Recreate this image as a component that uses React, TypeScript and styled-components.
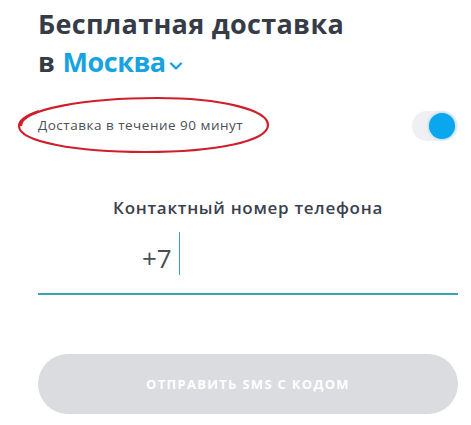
import React from "react";
import styled, { createGlobalStyle } from "styled-components";

const GlobalStyle = createGlobalStyle`
  html, body {
    margin: 0;
    padding: 0;
    background: #ffffff;
  }
  body {
    font-family: "Open Sans", "Noto Sans", sans-serif;
  }
`;

function App() {
  return (
    <StyledPage>
      <GlobalStyle />
      <Title>
        Бесплатная доставка
        <br />в <City>Москва</City>
        <Chevron viewBox="0 0 14 10" aria-hidden="true">
          <path d="M2 2.5 L7 7.5 L12 2.5" />
        </Chevron>
      </Title>

      <OptionRow>
        <OptionText>Доставка в течение 90 минут</OptionText>
        <Mark viewBox="0 0 254 60" aria-hidden="true">
          <path d="M4 31 C 4 14, 70 3, 140 3 C 205 3, 251 15, 251 30 C 251 46, 200 57, 128 57 C 60 57, 2 47, 2 31 C 2 25, 10 20, 22 16" />
        </Mark>
        <Toggle>
          <Knob />
        </Toggle>
      </OptionRow>

      <PhoneBlock>
        <Label>Контактный номер телефона</Label>
        <InputRow>
          <Prefix>+7</Prefix>
          <Caret />
        </InputRow>
      </PhoneBlock>

      <SubmitButton disabled>Отправить SMS с кодом</SubmitButton>
    </StyledPage>
  );
}

const StyledPage = styled.div`
  width: 420px;
  padding: 5px 0 0 38px;
  display: flex;
  flex-direction: column;
`;

const Title = styled.h1`
  margin: 0;
  font-family: "Open Sans", sans-serif;
  font-size: 27px;
  font-weight: 700;
  line-height: 38px;
  letter-spacing: 0.3px;
  color: #353b47;
`;

const City = styled.span`
  color: #17a3e1;
  letter-spacing: -0.5px;
`;

const Chevron = styled.svg`
  width: 14px;
  height: 10px;
  margin-left: 3px;
  vertical-align: 1px;
  fill: none;
  stroke: #17a3e1;
  stroke-width: 2.4;
  stroke-linecap: round;
  stroke-linejoin: round;
`;

const OptionRow = styled.div`
  position: relative;
  margin-top: 27px;
  height: 34px;
  display: flex;
  align-items: center;
  justify-content: space-between;
`;

const OptionText = styled.span`
  font-family: "Open Sans", sans-serif;
  font-size: 13.5px;
  letter-spacing: 0.5px;
  color: #4b4f57;
`;

const Mark = styled.svg`
  position: absolute;
  left: -21px;
  top: -13px;
  width: 254px;
  height: 60px;
  fill: none;
  stroke: #cf1f2c;
  stroke-width: 2.2;
`;

const Toggle = styled.div`
  width: 46px;
  height: 30px;
  margin-top: 2px;
  border-radius: 15px;
  background: #eef0f3;
  display: flex;
  align-items: center;
  justify-content: flex-end;
  padding-right: 3px;
  box-sizing: border-box;
`;

const Knob = styled.div`
  width: 26px;
  height: 26px;
  border-radius: 50%;
  background: #0aa6ee;
  box-shadow: 0 0 3px rgba(10, 166, 238, 0.5);
`;

const PhoneBlock = styled.div`
  margin-top: 54px;
  display: flex;
  flex-direction: column;
  align-items: center;
`;

const Label = styled.div`
  font-family: "Open Sans", sans-serif;
  font-size: 17px;
  font-weight: 600;
  letter-spacing: 0.7px;
  color: #3b414d;
`;

const InputRow = styled.div`
  align-self: stretch;
  margin-top: 13px;
  height: 61px;
  border-bottom: 2px solid #3ba3b5;
  display: flex;
  align-items: flex-start;
  padding-left: 104px;
`;

const Prefix = styled.span`
  font-family: "Open Sans", sans-serif;
  font-size: 26px;
  line-height: 30px;
  margin-top: 11px;
  color: #4a4d52;
`;

const Caret = styled.span`
  width: 1px;
  height: 43px;
  margin-left: 7px;
  background: #3ba3b5;
`;

const SubmitButton = styled.button`
  margin-top: 59px;
  height: 60px;
  border: none;
  border-radius: 30px;
  background: #dadce0;
  color: #ffffff;
  font-family: "Open Sans", sans-serif;
  font-size: 13px;
  font-weight: 700;
  letter-spacing: 1.3px;
  text-transform: uppercase;
  cursor: default;
`;

export default App;
